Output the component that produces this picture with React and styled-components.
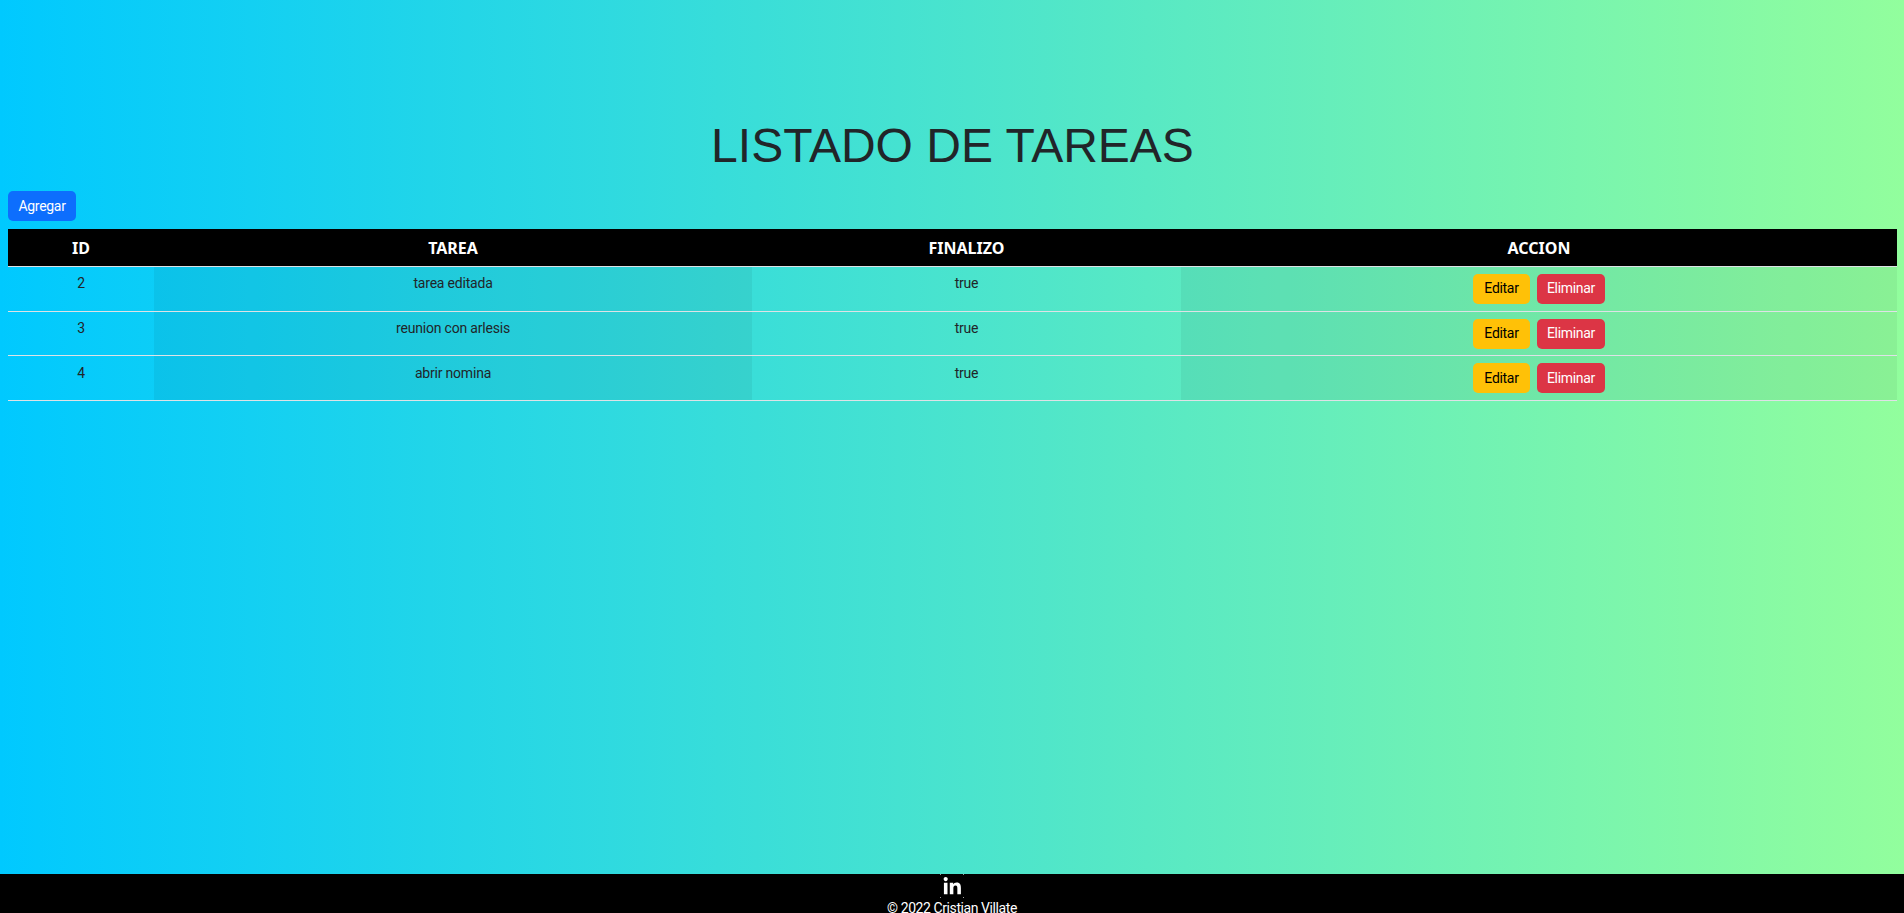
import React from "react";
import styled, { createGlobalStyle } from "styled-components";

const Global = createGlobalStyle`
  html, body { margin: 0; padding: 0; height: 100%; }
  body {
    font-family: Roboto, "Noto Sans", sans-serif;
    font-size: 14px;
    line-height: 1.5;
    color: #212529;
  }
`;

const Page = styled.div`
  height: 913px;
  overflow: hidden;
  display: flex;
  flex-direction: column;
  background: linear-gradient(90deg, #00c9ff 0%, #92fe9d 100%);
`;

const Main = styled.main`
  flex: 1;
  padding: 0 7px 0 8px;
  display: flex;
  flex-direction: column;
`;

const Title = styled.h1`
  margin: 116px 0 15px;
  font: 400 48px/1.25 "Liberation Sans", Arial, sans-serif;
  text-align: center;
  color: #212529;
`;

const Button = styled.button`
  font: 400 14px/21px Roboto, sans-serif;
  letter-spacing: -0.3px;
  height: 30px;
  width: ${(p) => p.$w}px;
  padding: 0;
  border: 0;
  border-radius: 5px;
  color: ${(p) => p.$fg};
  background: ${(p) => p.$bg};
`;

const AddRow = styled.div`
  display: flex;
  margin-bottom: 7.8px;
`;

const Table = styled.table`
  width: 1889px;
  table-layout: fixed;
  border-collapse: collapse;
`;

const Head = styled.th`
  box-sizing: border-box;
  background: #000;
  color: #fff;
  font: 700 16px/21px "Noto Sans", sans-serif;
  height: 37.6px;
  padding: 2px 0 0;
  border-bottom: 1px solid #dee2e6;
  text-align: center;
`;

const Cell = styled.td`
  padding: 6.6px 8px 6px;
  height: 44.67px;
  box-sizing: border-box;
  letter-spacing: -0.2px;
  text-align: center;
  vertical-align: top;
  border-bottom: 1px solid #dee2e6;
  background: ${(p) => (p.$shade ? "rgba(0,0,0,0.05)" : "transparent")};
`;

const Actions = styled.div`
  display: flex;
  justify-content: center;
  gap: 7px;
  margin-top: 0.4px;
`;

const Footer = styled.footer`
  height: 39px;
  background: #000;
  color: #fff;
  text-align: center;
  overflow: hidden;
`;

const Badge = styled.svg`
  display: block;
  width: 24px;
  height: 24px;
  margin: 0 auto;
`;

const Copy = styled.div`
  font-size: 14px;
  line-height: 21px;
  letter-spacing: -0.42px;
`;

const LinkedIn = () => (
  <Badge viewBox="0 0 24 24" aria-hidden="true">
    <path
      fill="#fff"
      d="M0 0h.8v.8H0zM23.2 0h.8v.8h-.8zM0 23.2h.8v.8H0zM23.2 23.2h.8v.8h-.8z"
    />
    <path
      fill="#fff"
      d="M20.9 20.2h-3.55v-5.57c0-1.33-.03-3.04-1.85-3.04-1.85 0-2.14 1.45-2.14 2.94v5.67H9.8V8.75h3.41v1.56h.05c.48-.9 1.64-1.85 3.37-1.85 3.6 0 4.27 2.37 4.27 5.46v6.28zM5.7 7.18c-1.14 0-2.06-.93-2.06-2.07 0-1.13.92-2.06 2.06-2.06 1.14 0 2.07.93 2.07 2.06 0 1.14-.93 2.07-2.07 2.07zm1.79 13.02H3.92V8.75h3.57V20.2z"
    />
  </Badge>
);

const rows = [
  [2, "tarea editada"],
  [3, "reunion con arlesis"],
  [4, "abrir nomina"],
];

export default function App() {
  return (
    <Page>
      <Global />
      <Main>
        <Title>LISTADO DE TAREAS</Title>
        <AddRow>
          <Button $w={68} $fg="#fff" $bg="#0d6efd">Agregar</Button>
        </AddRow>
        <Table>
          <colgroup>
            <col style={{ width: 146 }} />
            <col style={{ width: 598 }} />
            <col style={{ width: 429 }} />
            <col />
          </colgroup>
          <thead>
            <tr>
              <Head>ID</Head>
              <Head>TAREA</Head>
              <Head>FINALIZO</Head>
              <Head>ACCION</Head>
            </tr>
          </thead>
          <tbody>
            {rows.map(([id, name]) => (
              <tr key={id}>
                <Cell>{id}</Cell>
                <Cell $shade>{name}</Cell>
                <Cell>true</Cell>
                <Cell $shade>
                  <Actions>
                    <Button $w={57} $fg="#000" $bg="#ffc107">Editar</Button>
                    <Button $w={68} $fg="#fff" $bg="#dc3545">Eliminar</Button>
                  </Actions>
                </Cell>
              </tr>
            ))}
          </tbody>
        </Table>
      </Main>
      <Footer>
        <LinkedIn />
        <Copy>© 2022 Cristian Villate</Copy>
      </Footer>
    </Page>
  );
}
